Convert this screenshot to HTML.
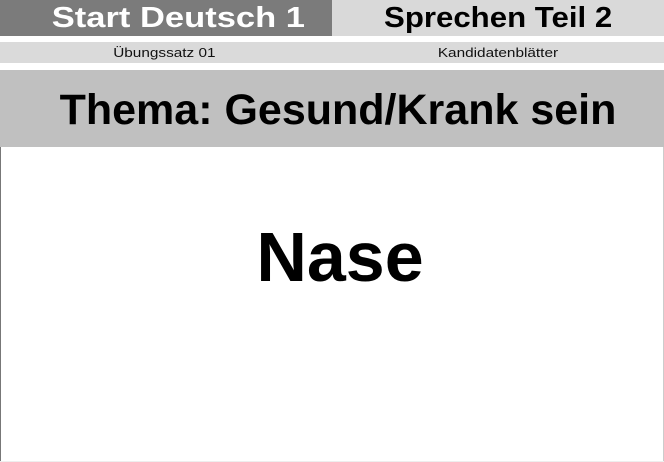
<!DOCTYPE html>
<html><head><style>
body{margin:0;width:664px;height:462px;position:relative;background:#fff;font-family:"Liberation Sans",sans-serif;overflow:hidden}
div{position:absolute;box-sizing:border-box}
.t{font-weight:bold;white-space:nowrap;text-align:center}
span{display:inline-block}
</style></head><body>
<div style="left:0;top:0;width:332px;height:36px;background:#7b7b7b"></div>
<div style="left:332px;top:0;width:332px;height:36px;background:#d9d9d9"></div>
<div class="t" style="left:0;top:1px;width:357px;font-size:29px;line-height:34px;color:#fff"><span style="transform:scaleX(1.19)">Start Deutsch 1</span></div>
<div class="t" style="left:332px;top:1px;width:332px;font-size:29px;line-height:34px;color:#000"><span style="transform:scaleX(1.075)">Sprechen Teil 2</span></div>
<div style="left:0;top:42px;width:664px;height:21px;background:#dadada"></div>
<div style="left:0;top:42px;width:328px;font-size:13px;line-height:21px;text-align:center;color:#111"><span style="transform:scaleX(1.18)">Übungssatz 01</span></div>
<div style="left:332px;top:42px;width:332px;font-size:13px;line-height:21px;text-align:center;color:#111"><span style="transform:scaleX(1.18)">Kandidatenblätter</span></div>
<div style="left:0;top:70px;width:664px;height:77px;background:#c0c0c0"></div>
<div class="t" style="left:0;top:84px;width:676px;font-size:43px;line-height:52px;color:#000">Thema: Gesund/Krank sein</div>
<div style="left:0;top:147px;width:1px;height:315px;background:#777"></div>
<div style="left:663px;top:147px;width:1px;height:315px;background:#ccc"></div>
<div style="left:0;top:461px;width:664px;height:1px;background:#eee"></div>
<div class="t" style="left:0;top:217px;width:680px;font-size:70px;line-height:80px;color:#000">Nase</div>
</body></html>
